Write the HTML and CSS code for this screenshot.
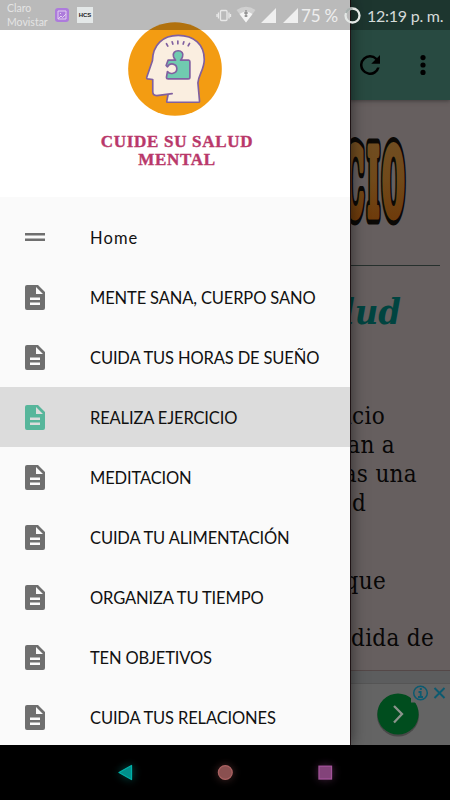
FILE: index.html
```html
<!DOCTYPE html>
<html lang="es">
<head>
<meta charset="utf-8">
<title>Cuide su salud mental</title>
<link rel="stylesheet" href="styles.css">
</head>
<body>
<svg class="defs" width="0" height="0">
  <symbol id="doc" viewBox="0 0 20 25"><path fill-rule="evenodd" d="M2 0h11l7 7v16a2 2 0 0 1-2 2H2a2 2 0 0 1-2-2V2a2 2 0 0 1 2-2zM11 2v7h7zM5 12.6v2.5h10v-2.5zM5 17.600v2.500h10v-2.500z"/></symbol>
</svg>
<div class="screen">
  <div class="page">
    <div class="toolbar">
      <svg class="refresh" viewBox="4 4 16 16" width="20" height="20"><path d="M17.650 6.350A7.960 7.960 0 0 0 12 4a8 8 0 1 0 7.730 10h-2.080A6 6 0 1 1 12 6c1.660 0 3.140.69 4.220 1.780L13 11h7V4z"/></svg>
      <svg viewBox="0 0 6 20" width="6" height="20"><circle cx="3" cy="2.600" r="2.600"/><circle cx="3" cy="10" r="2.600"/><circle cx="3" cy="17.400" r="2.600"/></svg>
    </div>
    <div class="content">
      <svg class="banner" viewBox="0 0 100 165" width="100" height="165">
        <defs><linearGradient id="gold" gradientUnits="userSpaceOnUse" x1="0" y1="-72" x2="0" y2="5"><stop offset="0" stop-color="#704d21"/><stop offset=".5" stop-color="#70491a"/><stop offset="1" stop-color="#6e3b0b"/></linearGradient></defs>
        <g class="banner-text">
          <g transform="translate(-6 114.500) scale(.275 1)"><text class="edge">C</text><text class="face" aria-hidden="true">C</text></g>
          <g transform="translate(17.500 114.500) scale(.275 1)"><text class="edge">I</text><text class="face" aria-hidden="true">I</text></g>
          <g transform="translate(32.500 114.500) scale(.275 1)"><text class="edge">O</text><text class="face" aria-hidden="true">O</text></g>
        </g>
      </svg>
      <div class="rule"></div>
      <h2>Salud</h2>
      <p><span class="l1">icio</span><span class="l2">an a</span><span class="l3">as una</span><span class="l4">d</span></p>
      <p class="second"><span class="l5">que</span></p>
      <p class="third"><span class="l6">dida de</span></p>
    </div>
    <div class="ad">
      <div class="ad-card">
        <svg width="100" height="61" viewBox="350 684 100 61">
          <circle cx="398" cy="715.500" r="21" fill="#484848"/><circle cx="398" cy="714" r="20.600" fill="#004d1e"/>
          <path d="M411 684h39v18.500h-39z" fill="#646464"/>
          <path d="M394 706l8 8-8 8.500" fill="none" stroke="#8b938c" stroke-width="2.300"/>
          <g fill="none" stroke="#0c5a70" stroke-width="1.500"><circle cx="420.500" cy="693" r="6.800"/><path d="M434.500 688l10 10m0-10l-10 10" stroke-width="1.900"/><path d="M418.500 692h2.200v5m-2.700 0h5m-3.200-8h2" stroke-width="1.800"/></g>
        </svg>
      </div>
    </div>
  </div>

  <aside class="drawer">
    <header class="brand">
      <svg class="logo" viewBox="114 8 281 281" width="94" height="94">
        <circle cx="254.500" cy="148.500" r="140" fill="#f39c12"/>
        <g stroke="#8060a0" stroke-width="5" stroke-linejoin="round" stroke-linecap="round" fill="#faeee0">
          <path d="M246 222L200 228Q188 228 188 216V180L172 178Q169 177 170 173L187 124C188 76 218 48 264 48C312 48 342 76 342 120C342 150 325 164 323 190L328 246Q328 248 324 248H231Q229 247 230 244L234 224"/>
          <path d="M234 122H256Q252 117 250 111C247 101 254 94 264 94C274 94 281 102 277 112Q275 118 271 122H295Q299 122 299 127V173Q299 178 294 178H234Q229 178 229 173L232 156C239 166 260 163 260 148C260 132 240 128 232 142L228 138Z" fill="#70cbb0"/>
          <path d="M229 73l4 7M246 67l2 7M263 65v8M281 67l-2 7M298 72l-4 7"/>
        </g>
      </svg>
      <h1><span class="t1">CUIDE SU SALUD</span><span class="t2">MENTAL</span></h1>
    </header>
    <nav>
      <a class="item"><svg class="home" width="20" height="8" viewBox="0 0 20 8"><path d="M0 0h20v2.500H0zM0 5.500h20V8H0z"/></svg><span class="m0">Home</span></a>
      <a class="item"><svg width="20" height="25"><use href="#doc"/></svg><span>MENTE SANA, CUERPO SANO</span></a>
      <a class="item"><svg width="20" height="25"><use href="#doc"/></svg><span>CUIDA TUS HORAS DE SUEÑO</span></a>
      <a class="item active"><svg width="20" height="25"><use href="#doc"/></svg><span>REALIZA EJERCICIO</span></a>
      <a class="item"><svg width="20" height="25"><use href="#doc"/></svg><span>MEDITACION</span></a>
      <a class="item"><svg width="20" height="25"><use href="#doc"/></svg><span>CUIDA TU ALIMENTACIÓN</span></a>
      <a class="item"><svg width="20" height="25"><use href="#doc"/></svg><span>ORGANIZA TU TIEMPO</span></a>
      <a class="item"><svg width="20" height="25"><use href="#doc"/></svg><span>TEN OBJETIVOS</span></a>
      <a class="item"><svg width="20" height="25"><use href="#doc"/></svg><span>CUIDA TUS RELACIONES</span></a>
    </nav>
  </aside>

  <div class="status">
    <div class="carrier"><span>Claro</span><span>Movistar</span></div>
    <svg class="gallery" width="14" height="14" viewBox="0 0 14 14"><rect width="14" height="14" rx="3" fill="#ad7bdc"/><path d="M3 3h8v8H3zM3 11l3-3 1.500 1.500L11 6M5 5.500h1" fill="none" stroke="#e2d1f0" stroke-width="1"/></svg>
    <span class="badge">HCS</span>
    <svg class="signals" width="84" height="18" viewBox="215 6 84 18">
      <g fill="none" stroke="#e8e8e8" stroke-width="1.300"><rect x="220.500" y="10.500" width="6.500" height="10" rx="1"/><path d="M218.500 12.500v6M229 12.500v6M217 14v3M230.500 14v3"/></g>
      <path d="M236.500 10Q246 3.500 255.500 10L246 22.500z" fill="#d0d0d0"/><path d="M239.500 14Q246 9 252.500 14L246 22.500z" fill="#f4f4f4"/>
      <path d="M246 10v7M244 13h4M244.500 16h3" stroke="#777" stroke-width="1" fill="none"/>
      <path d="M276 8v15h-15zM298 8v15h-15z" fill="#efefef"/>
    </svg>
    <span class="battery">75 %</span>
    <svg class="ring" width="17" height="17" viewBox="0 0 17 17"><circle cx="8.500" cy="8.500" r="7" fill="none" stroke="#e4e8e6" stroke-width="2.300"/><path d="M8.500 1.500A7 7 0 0 0 2 6" fill="none" stroke="#a8b0ae" stroke-width="2.500"/></svg>
    <span class="clock">12:19 p. m.</span>
  </div>

  <div class="navbar">
    <svg width="450" height="55" viewBox="0 745 450 55">
      <defs><filter id="glow" x="-1" y="-1" width="3" height="3"><feGaussianBlur stdDeviation="5"/></filter></defs>
      <g filter="url(#glow)" opacity=".5"><path d="M119 772.500l13-8v16z" fill="#00b5ac"/><circle cx="225.300" cy="772.500" r="7" fill="#a55e5e"/><path d="M319 766h13v13h-13z" fill="#a04e92"/></g>
      <path d="M119 772.500l12.500-7v14z" fill="#008f8b" stroke="#00b0a8" stroke-width="1.300" stroke-linejoin="round"/>
      <circle cx="225.300" cy="772.500" r="6.900" fill="#8a5050" stroke="#ab6262" stroke-width="1.300"/>
      <rect x="319" y="766.200" width="12.500" height="12.800" fill="#83437a" stroke="#a3539a" stroke-width="1.300"/>
    </svg>
  </div>
</div>
</body>
</html>
```
FILE: styles.css
```css
* { box-sizing: border-box; }
body { margin: 0; background: #000; }
.defs { position: absolute; }
svg { display: block; flex: none; }
.screen { position: relative; width: 450px; height: 800px; overflow: hidden; display: flex; flex-direction: column; }

/* Dimmed page behind the drawer */
.page { height: 745px; padding-left: 350px; background: #665f5f; display: flex; flex-direction: column; }
.toolbar { height: 100px; flex: none; padding: 30px 24px 0 10px; background: #284a41; display: flex; align-items: center; justify-content: space-between; box-shadow: 0 1px 4px #403c3c; }
.content { height: 571px; overflow: hidden; }
.banner-text { font: bold 91px "DejaVu Serif", serif; stroke-linejoin: round; }
.edge { fill: #0b0906; stroke: #0b0906; stroke-width: 19px; }
.face { fill: url(#gold); stroke: url(#gold); stroke-width: 9px; }
.rule { width: 90px; height: 1px; background: #26302d; }
h2 { margin: 23px 49px 0 0; height: 44px; display: flex; justify-content: flex-end; white-space: nowrap; font: italic bold 36px/44px "DejaVu Serif Condensed", "DejaVu Serif", serif; color: #004440; }
p { margin: 69px 0 0; display: flex; flex-direction: column; align-items: flex-end; font: 24px/29px "DejaVu Serif Condensed", "DejaVu Serif", serif; letter-spacing: .3px; color: #080707; white-space: pre; }
p.second { margin-top: 49px; }
p.third { margin-top: 28px; }
.l1 { margin-right: 65px; }
.l2 { margin-right: 55px; }
.l3 { margin-right: 33px; }
.l4 { margin-right: 84px; }
.l5 { margin-right: 64px; }
.l6 { margin-right: 16px; }
.ad { flex: 1; padding-top: 12px; background: #5c5d5e; border-top: 1px solid #544848; }
.ad-card { height: 62px; background: #646464; border-top: 1px solid #555; }

/* Drawer */
.drawer { position: absolute; left: 0; top: 0; width: 350px; height: 745px; background: #fafafa; box-shadow: 1px 0 #201416, 1px 0 14px rgba(0,0,0,.55); }
.brand { height: 197px; padding-top: 22px; background: #fff; }
.logo { margin-left: 128px; }
h1 { margin: 17px 0 0; font: bold 17px/18px "Liberation Serif", serif; color: #b9386a; -webkit-text-stroke: .4px #b9386a; display: flex; flex-direction: column; align-items: center; }
.t1 { letter-spacing: .7px; margin-left: 4px; }
.t2 { letter-spacing: .7px; margin-left: 4px; }
nav { padding-top: 10px; }
.item { height: 60px; padding-left: 25px; display: flex; align-items: center; gap: 45px; font: 16.500px/24px Lato, sans-serif; letter-spacing: -.14px; color: #111; white-space: nowrap; fill: #6f6f6f; }
.item span { padding-top: 2px; }
.item .m0 { letter-spacing: 1.1px; }
.active { background: #dcdcdc; fill: #57b69b; }

/* Status bar */
.status { position: absolute; left: 0; top: 0; width: 450px; height: 30px; background: rgba(0,0,0,.27); display: flex; align-items: center; color: #eee; font-family: Lato, sans-serif; white-space: nowrap; }
.carrier { width: 48px; margin-left: 7px; font-size: 10.500px; line-height: 14px; color: #e4e4e4; display: flex; flex-direction: column; }
.badge { width: 16px; height: 16px; margin: 0 122px 0 8px; background: #e4e8e8; color: #222; font: bold 6px/16px "Liberation Sans", sans-serif; text-align: center; }
.battery { width: 43px; margin-left: 2px; font-size: 17px; letter-spacing: -.2px; }
.clock { margin-left: 6px; font-size: 16px; letter-spacing: -.25px; color: #d5dad8; }
.navbar { height: 55px; background: #000; }
```
